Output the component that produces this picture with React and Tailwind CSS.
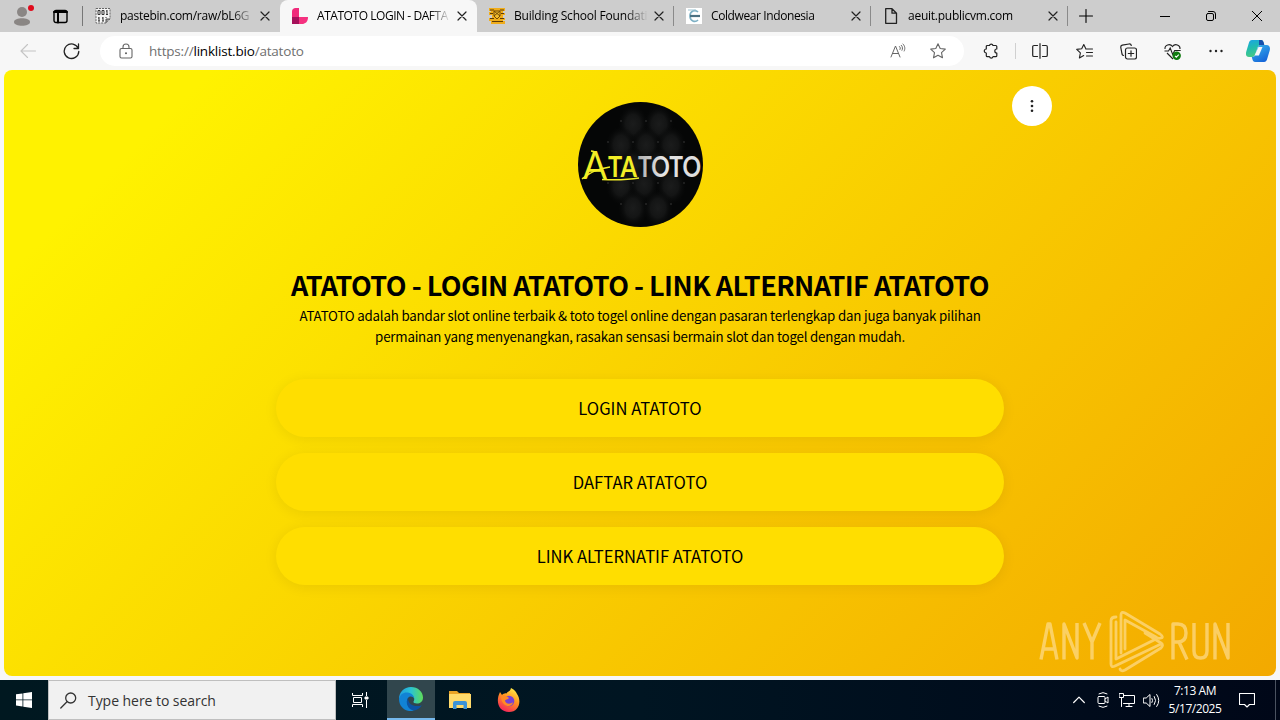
const UI_FONT = "font-['Open_Sans','Noto_Sans',sans-serif]";

const LINKS = ["LOGIN ATATOTO", "DAFTAR ATATOTO", "LINK ALTERNATIF ATATOTO"];

function Icon({ children, className = "", size = 16, box = "0 0 16 16", strokeWidth = 1 }) {
  return (
    <svg
      width={size}
      height={size}
      viewBox={box}
      fill="none"
      stroke="currentColor"
      strokeWidth={strokeWidth}
      strokeLinecap="round"
      strokeLinejoin="round"
      className={`shrink-0 ${className}`}
    >
      {children}
    </svg>
  );
}

function BinaryIcon() {
  return (
    <svg width="16" height="16" viewBox="0 0 16 16" className="shrink-0">
      <path d="M1 .5h14v10.5l-4 4H1z" fill="#f5f5f5" stroke="#666" strokeDasharray="2 1" />
      <path d="M15 11h-4v4" fill="#999" stroke="#555" />
      <g stroke="#333" fill="none">
        <path d="M3 2.5h2v4H3zM7 2.5h2v4H7zM12 2v5M11 3h1M11 6.5h2" />
        <path d="M4 9v4M3 10h1M3 13h2M8 9v4M7 10h1M7 13h2M11 9v1" />
      </g>
    </svg>
  );
}

function LinklistIcon() {
  return (
    <svg width="16" height="16" viewBox="0 0 16 16" className="shrink-0">
      <path d="M0 3.5C0 1.5 1.5 0 3.500 0H7v9H0z" fill="#f02a7b" />
      <path d="M0 9h7v7H0z" fill="#a5105a" />
      <path d="M7 9h9c0 5-3 7-6 7H7z" fill="#f5317f" />
    </svg>
  );
}

function SchoolIcon() {
  return (
    <svg width="16" height="16" viewBox="0 0 16 16" className="shrink-0">
      <path d="M0 0h16v3h-2v2h2v2h-2v3h2v2h-2v1h2v3H2v-3H0v-3h3V7H0V4h2V3H0z" fill="#f0ad1b" />
      <path d="M1 2h4M11 2h4M1 5.500h3M12 5.500h3M1 10.500h4M11 10.500h4M3 13.500h11" stroke="#5d3b06" />
      <path d="M5 3h6v5l-3 3-3-3zM5 3l6 5M11 3L5 8" fill="#f3bc2c" stroke="#704909" />
    </svg>
  );
}

function ColdwearIcon() {
  return (
    <svg width="16" height="16" viewBox="0 0 16 16" className="shrink-0">
      <path d="M0 0h16v16H0z" fill="#fff" />
      <path d="M12 4C9 1 4 3 4 8s5 7 8 4" fill="none" stroke="#7db0c4" strokeWidth="1.700" />
      <path d="M2 2h8" stroke="#9ec4d2" />
      <path d="M4 8h10" stroke="#4c7182" strokeWidth="2.200" />
    </svg>
  );
}

function PageIcon() {
  return (
    <Icon strokeWidth={1.3} className="text-[#222]">
      <path d="M2.700.7H9l4.500 4.500v10.100H2.700zM9 .7v4.500h4.500" />
    </Icon>
  );
}

const TABS = [
  { icon: BinaryIcon, title: "pastebin.com/raw/bL6G", tracking: "tracking-[-0.25px]", divider: false },
  { icon: LinklistIcon, title: "ATATOTO LOGIN - DAFTA", tracking: "tracking-[-0.45px]", active: true },
  { icon: SchoolIcon, title: "Building School Foundati", tracking: "tracking-[-0.2px]", divider: true },
  { icon: ColdwearIcon, title: "Coldwear Indonesia", tracking: "tracking-[-0.4px]", divider: true },
  { icon: PageIcon, title: "aeuit.publicvm.com", tracking: "tracking-[-0.25px]", divider: true },
];

function Tab({ tab }) {
  const TabIcon = tab.icon;
  return (
    <div
      className={`flex h-8 w-[197px] shrink-0 items-center pl-3 ${
        tab.active ? "rounded-t-lg bg-[#f7f7f7]" : ""
      }`}
    >
      <TabIcon />
      <span
        className={`ml-[9px] w-[134px] shrink-0 whitespace-nowrap text-[12px] leading-8 text-black [mask-image:linear-gradient(to_right,#000_112px,transparent_134px)] ${tab.tracking}`}
      >
        {tab.title}
      </span>
      <Icon size={10} box="0 0 10 10" className="ml-[6px] text-[#222]" strokeWidth={1.2}>
        <path d="M1 1l8 8M9 1L1 9" />
      </Icon>
      <span className={`ml-auto h-5 w-px ${tab.divider ? "bg-[#8a8a8a]" : ""}`} />
    </div>
  );
}

function TabStrip() {
  return (
    <div className="flex h-8 items-center bg-[#cdcdcd]">
      <div className="relative ml-[13px] flex h-8 w-[18px] items-center">
        <svg width="18" height="20" viewBox="0 0 18 20">
          <circle cx="9" cy="6" r="5" fill="#8a8684" />
          <path d="M1 16c0-5 16-5 16 0 0 5-16 5-16 0z" fill="#8a8684" />
        </svg>
        <span className="absolute top-[5px] left-[15px] size-1.5 rounded-full bg-[#e00b1c]" />
      </div>
      <Icon size={15} box="0 0 15 15" className="ml-[22px] text-black" strokeWidth={1.4}>
        <rect x="1" y="1.500" width="13" height="12" rx="2" />
        <path d="M1 3h13M5 4.500v9" strokeWidth="2" />
      </Icon>
      <span className="ml-[14px] h-5 w-px bg-[#777]" />
      <div className="flex">
        {TABS.map((tab) => (
          <Tab key={tab.title} tab={tab} />
        ))}
      </div>
      <div className="flex flex-1 items-center justify-between pr-[18px] pl-[11px] text-black">
        <Icon size={14} box="0 0 14 14" strokeWidth={1.100}>
          <path d="M7 .5v13M.5 7h13" />
        </Icon>
        <div className="flex items-center gap-[36px]">
          <Icon size={10} box="0 0 10 10">
            <path d="M0 5.500h10" />
          </Icon>
          <Icon size={10} box="0 0 10 10">
            <rect x=".5" y="2.500" width="7" height="7" rx="1.500" />
            <path d="M2.500.5h4.500a2.500 2.500 0 0 1 2.500 2.500v4.500" />
          </Icon>
          <Icon size={10} box="0 0 10 10">
            <path d="M0 0l10 10M10 0L0 10" />
          </Icon>
        </div>
      </div>
    </div>
  );
}

function CopilotIcon() {
  return (
    <svg width="24" height="22" viewBox="0 0 24 22" className="shrink-0">
      <defs>
        <linearGradient id="copLeft" x1="0" y1="0" x2="0.3" y2="1">
          <stop offset="0" stopColor="#1aa3e8" />
          <stop offset=".5" stopColor="#21bcae" />
          <stop offset="1" stopColor="#47c985" />
        </linearGradient>
        <linearGradient id="copRight" x1="0" y1="0" x2="0.6" y2="1">
          <stop offset="0" stopColor="#39b8ed" />
          <stop offset="1" stopColor="#1667d9" />
        </linearGradient>
      </defs>
      <path d="M6 0h9c2 0 2.500 1.500 3.200 5H15c-2 0-3 1-3.600 3L9.500 14C8.800 16 8 17 6 17H3c-3 0-3.500-2.500-2.700-5.500l2.400-8C3.300 1.500 4 0 6 0z" fill="url(#copLeft)" />
      <path d="M13 0h2c2 0 2.600 1.600 3.300 5H15c-1 0-1.500.4-2 1z" fill="#174fab" />
      <path d="M18 22H9.500c-2.500 0-3-2-3.700-5 2 0 3-.6 3.700-3l2-6c.6-2 1.500-3 3.500-3h5.500c3 0 4 2.500 3.200 5.500l-2.400 8C20.700 20.500 20 22 18 22z" fill="url(#copRight)" />
      <path d="M12.500 7h4l-3.600 8.500H8.500z" fill="#f7f7f7" />
    </svg>
  );
}

function Toolbar() {
  return (
    <div className="flex h-[38px] items-center text-[#222]">
      <Icon className="ml-5 text-[#c4c4c4]" strokeWidth={1.100}>
        <path d="M15.500 8H1M7.500 1.500L1 8l6.500 6.500" />
      </Icon>
      <Icon size={17} box="0 0 17 17" className="ml-[27px]" strokeWidth={1.300}>
        <path d="M15.300 5.500A7.300 7.300 0 1 0 15.800 8.500M15.500 1v4.500H11" />
      </Icon>
      <div className="ml-[20px] flex h-[30px] w-[864px] items-center rounded-full bg-white text-[#666]">
        <Icon className="ml-[18px]" strokeWidth={1.100}>
          <rect x="2" y="5.500" width="12" height="9.500" rx="1.500" />
          <path d="M5 5.500V4a3 3 0 0 1 6 0v1.500" />
          <circle cx="8" cy="10.200" r=".5" fill="currentColor" />
        </Icon>
        <span className="ml-[15px] text-[13.500px] tracking-[-0.2px] text-[#707070]">
          https://<span className="text-black">linklist.bio</span>/atatoto
        </span>
        <svg width="16" height="16" viewBox="0 0 16 16" className="ml-auto" fill="none" stroke="#666" strokeLinecap="round">
          <path d="M1 14L5.500 3 10 14M2.500 10.500h6M9.500 3.500c1 .8 1 2.200.5 3M11.300 2.300c1.500 1.500 1.500 3.700.7 5M13 1c2.200 2.200 2.200 5 1.200 7" />
        </svg>
        <Icon className="mr-[18px] ml-[24px]" strokeWidth={1.100}>
          <path d="M8 .8l2.200 4.700 5.100.6-3.800 3.500 1 5.200L8 12.300l-4.500 2.500 1-5.200L.7 6.100l5.100-.6z" />
        </Icon>
      </div>
      <Icon className="ml-[19px]" strokeWidth={1.200}>
        <path d="M4.300 2.500H6.500a1.800 1.800 0 0 1 3.500 0h2.800a1 1 0 0 1 1 1V6a2 2 0 1 0 0 4v2.700a1 1 0 0 1-1 1H10a1.800 1.800 0 0 1-3.500 0H4.300a1 1 0 0 1-1-1V10a2 2 0 0 1 0-4V3.500a1 1 0 0 1 1-1z" />
      </Icon>
      <span className="ml-[16px] h-4 w-px bg-[#d0d0d0]" />
      <Icon className="ml-[16px]" strokeWidth={1.200}>
        <path d="M5.500 2.500H2A1.300 1.300 0 0 0 .7 3.800v8.400A1.300 1.300 0 0 0 2 13.500h3.500M8 .7v14.600M10.500 2.500H14a1.300 1.300 0 0 1 1.300 1.300v8.400a1.300 1.300 0 0 1-1.300 1.300h-3.500" />
      </Icon>
      <Icon size={17} box="0 0 17 17" className="ml-[28px]" strokeWidth={1.100}>
        <path d="M9.800 5.800L7.800 1.500 5.700 5.800l-5 .6 3.700 3.500-1 5 4.300-2.400M9.800 6h6.700M10.500 9.500h6M10.500 13h6" />
      </Icon>
      <Icon size={17} box="0 0 17 17" className="ml-[27px]" strokeWidth={1.200}>
        <path d="M3.500 12.500A2 2 0 0 1 2 11L.8 4.500a2 2 0 0 1 1.500-2.300L9 1a2 2 0 0 1 2.300 1.500" />
        <rect x="5.500" y="5" width="11" height="11" rx="2" />
        <path d="M11 7.800v5.400M8.300 10.500h5.400" />
      </Icon>
      <svg width="18" height="17" viewBox="0 0 18 17" className="ml-[27px]" fill="none" stroke="#222" strokeWidth="1.100">
        <path d="M1 6C.5 2 6 0 8.500 3.500 11 0 16.500 2 16 6M3 10l6 6M.5 8h4l1.700-3 2.500 6.500 2-4h6" />
        <circle cx="12.700" cy="12.700" r="4.200" fill="#107c10" stroke="none" />
        <path d="M11 12.800l1.300 1.300 2.500-2.500" stroke="#fff" />
      </svg>
      <Icon className="ml-[26px]">
        <g fill="currentColor" stroke="none">
          <circle cx="2.500" cy="8" r="1.200" />
          <circle cx="8" cy="8" r="1.200" />
          <circle cx="13.500" cy="8" r="1.200" />
        </g>
      </Icon>
      <span className="ml-[22px]">
        <CopilotIcon />
      </span>
    </div>
  );
}

function Logo() {
  const studs = [
    [43, 19], [68, 19], [93, 19],
    [30, 40], [55, 40], [80, 40], [106, 40],
    [30, 81], [55, 81], [80, 81], [106, 81],
    [43, 102], [68, 102], [93, 102],
  ];
  const pads = [
    [55, 22], [81, 22], [43, 43], [68, 43], [93, 43], [55, 64],
    [80, 64], [43, 84], [66, 82], [93, 84], [55, 106], [80, 106],
  ];
  return (
    <svg width="125" height="125" viewBox="0 0 125 125">
      <defs>
        <radialGradient id="pad">
          <stop offset="0" stopColor="#1b1c1c" />
          <stop offset=".5" stopColor="#141515" />
          <stop offset="1" stopColor="#080909" stopOpacity="0" />
        </radialGradient>
        <linearGradient id="silver" gradientUnits="userSpaceOnUse" x1="60" y1="0" x2="122" y2="0">
          <stop offset="0" stopColor="#b0b0b0" />
          <stop offset=".4" stopColor="#e4e4e4" />
          <stop offset="1" stopColor="#dcdcdc" />
        </linearGradient>
        <clipPath id="round">
          <circle cx="62.500" cy="62.500" r="62.500" />
        </clipPath>
      </defs>
      <g clipPath="url(#round)">
        <path d="M0 0h125v125H0z" fill="#050606" />
        {pads.map(([x, y]) => (
          <ellipse key={`${x}-${y}`} cx={x} cy={y} rx="15" ry="19" fill="url(#pad)" />
        ))}
        {studs.map(([x, y]) => (
          <circle key={`${x}-${y}`} cx={x} cy={y} r=".8" fill="#3c3c3c" />
        ))}
      </g>
      <text y="75" fontSize="28" className="font-['Lato',sans-serif] font-bold">
        <tspan x="5" y="77" fontSize="38" fontWeight="400" fill="#f3ee26" textLength="24" lengthAdjust="spacingAndGlyphs">A</tspan>
        <tspan x="30" y="75" fill="#f3ee26" textLength="29" lengthAdjust="spacingAndGlyphs">TA</tspan>
        <tspan x="60" y="75" fill="url(#silver)" textLength="63" lengthAdjust="spacingAndGlyphs">TOTO</tspan>
      </text>
      <path d="M4 77c7-5 13-10 28-12M13 49c3 0 4 .5 5 3M24 77.500q22 1 37-1.500" stroke="#f3ee26" fill="none" strokeWidth="1.400" />
    </svg>
  );
}

function Watermark() {
  return (
    <svg width="196" height="64" viewBox="0 0 196 64" className="absolute right-[44px] bottom-[3px] overflow-visible opacity-65">
      <g fill="none" stroke="#ffe09a" strokeWidth="3.400" strokeLinejoin="round">
        <path d="M5 50.500L12 15h2l7 35.500M7.500 40h11" />
        <path d="M28 50.500V15l13 34V14" />
        <path d="M48 14l8 19 8-19M56 33v17.500" />
        <path d="M137 50.500V15h5q8 0 8 9t-8 9h-5M143 33l8 17.500" />
        <path d="M158 14v28q0 7 6.500 7t6.500-7V14" />
        <path d="M179 50.500V15l13 34V14" />
      </g>
      <g fill="none" stroke="#ffe09a" strokeWidth="2.800" strokeLinejoin="round" strokeLinecap="round">
        <path d="M80 8q-5 0-5 4v43q0 4 4 2l46-22" />
        <path d="M80 13v37l38-19" />
        <path d="M85 44V6q0-4 4-2l35 21q4 3 1 4t-5-1L89 11v29" />
        <path d="M84 60q1 3 5 1l36-22q3-3 0-5l-16-10" />
      </g>
    </svg>
  );
}

function ProfilePage() {
  return (
    <main className="relative mx-1 flex h-[606px] flex-col items-center overflow-hidden rounded-lg bg-[linear-gradient(135deg,#fff200_11%,#f3a900_100%)] font-['Noto_Sans_CJK_SC',sans-serif] text-black">
      <div className="mt-8 h-[125px]">
        <Logo />
      </div>
      <h1 className="mt-[40px] text-[27px] leading-[36px] font-bold tracking-[-0.55px] whitespace-nowrap">
        ATATOTO - LOGIN ATATOTO - LINK ALTERNATIF ATATOTO
      </h1>
      <p className="mt-[2px] text-center text-[13.3px] leading-[21px] tracking-[-0.2px] whitespace-nowrap">
        ATATOTO adalah bandar slot online terbaik &amp; toto togel online dengan pasaran terlengkap dan juga banyak pilihan
        <br />
        permainan yang menyenangkan, rasakan sensasi bermain slot dan togel dengan mudah.
      </p>
      <div className="mt-[32px] flex flex-col gap-4">
        {LINKS.map((link) => (
          <a
            key={link}
            className="flex h-[58px] w-[728px] items-center justify-center rounded-full bg-[#ffde00] text-[16.6px] shadow-[0_2px_14px_rgba(0,0,0,0.07)]"
          >
            {link}
          </a>
        ))}
      </div>
      <button className="absolute top-4 left-[1008px] flex size-10 items-center justify-center rounded-full bg-white">
        <svg width="4" height="14" viewBox="0 0 4 14" fill="#222">
          <circle cx="2" cy="2.300" r="1.300" />
          <circle cx="2" cy="7" r="1.300" />
          <circle cx="2" cy="11.700" r="1.300" />
        </svg>
      </button>
      <Watermark />
    </main>
  );
}

function EdgeIcon() {
  return (
    <svg width="24" height="24" viewBox="0 0 24 24">
      <defs>
        <linearGradient id="edgeTop" x1="0" x2="1">
          <stop offset="0" stopColor="#1e9de0" />
          <stop offset=".5" stopColor="#2bc3d2" />
          <stop offset="1" stopColor="#5fdc58" />
        </linearGradient>
      </defs>
      <path d="M0 12C0 5 5 0 12 0s12 5 12 10.500c0 4-3 6-6 6-2.500 0-4-1-3.500-2 1.500-2 1-5.500-3-6C7 8 2 9 0 12z" fill="url(#edgeTop)" />
      <path d="M0 12c1-5 5-7 8.500-6.500 4 .3 6.500 3 6.500 6-1-2-4-3-6-.5-3 4 1 10.500 6 12.500C7 26 0 20 0 12z" fill="#1183d5" />
      <path d="M9 11c-3 4-.5 12 6.500 12.500 3-.5 6-3 7.300-5.300C17 20.500 9 18.500 9 11z" fill="#0c53a3" />
    </svg>
  );
}

function FolderIcon() {
  return (
    <svg width="22" height="18" viewBox="0 0 22 18">
      <path d="M0 0h8l2 2h11v14H0z" fill="#e9a326" />
      <path d="M0 3h22v14H0z" fill="#ffda6b" />
      <path d="M4 18v-6q0-2 2-2h10q2 0 2 2v6h-3.500v-4h-7v4z" fill="#3b93d8" />
    </svg>
  );
}

function FirefoxIcon() {
  return (
    <svg width="24" height="24" viewBox="0 0 24 24">
      <defs>
        <linearGradient id="fox" x1=".8" y1="0" x2=".3" y2="1">
          <stop offset="0" stopColor="#fff34a" />
          <stop offset=".45" stopColor="#ff9420" />
          <stop offset="1" stopColor="#f5215c" />
        </linearGradient>
      </defs>
      <path d="M3 4l2 3c1-1 3-2 4.500-1.500C11 3 13 4 14 0c4 2 5 4 6 6 5 7 2 18-8 18S-2 14 3 4z" fill="url(#fox)" />
      <circle cx="12" cy="13" r="5.300" fill="#7541d5" />
      <path d="M4 8c3-1 6 0 8 2-1 2-4 1-4 3 2 4 6 3 8 1-1 7-12 5-12-6z" fill="#ff8a24" />
    </svg>
  );
}

function Taskbar() {
  return (
    <div className="flex h-10 items-center bg-linear-to-r from-[#001820] via-[#001522] to-[#000718] text-white">
      <div className="flex w-12 justify-center">
        <svg width="16" height="16" viewBox="0 0 16 16" fill="#fff">
          <path d="M0 2.300L6.500 1.400v6.100H0zM7.300 1.300L16 0v7.500H7.300zM0 8.300h6.500v6.200L0 13.600zM7.300 8.300H16V16l-8.700-1.300z" />
        </svg>
      </div>
      <div className="flex h-10 w-72 items-center border border-[#bfbfbf] bg-[#f1f1f1] pl-[11px] text-[#333]">
        <Icon size={17} box="0 0 17 17" strokeWidth={1.300}>
          <circle cx="10.700" cy="6" r="5" />
          <path d="M7 9.700L.8 16" />
        </Icon>
        <span className="ml-[11px] text-[14px] tracking-[-0.05px]">Type here to search</span>
      </div>
      <div className="flex w-[51px] justify-center pr-[3px]">
        <svg width="17" height="16" viewBox="0 0 17 16" fill="none" stroke="#fff">
          <path d="M.5 1v2.500h10V1M.5 15v-2.500h10V15M1.500 5.500h8v5h-8zM14.500 0v4M14.500 8v8" />
          <path d="M13 5h3v2h-3z" fill="#fff" />
        </svg>
      </div>
      <div className="flex h-10 w-12 items-center justify-center border-b-2 border-[#76b9ed] bg-[#31464d]">
        <EdgeIcon />
      </div>
      <div className="flex w-[49px] justify-center">
        <FolderIcon />
      </div>
      <div className="flex w-[49px] justify-center">
        <FirefoxIcon />
      </div>
      <div className="ml-auto flex items-center">
        <Icon size={12} box="0 0 12 12" strokeWidth={1.200}>
          <path d="M.7 8.500L6 3.200l5.300 5.300" />
        </Icon>
        <Icon className="ml-[10px]">
          <rect x="3" y="4.500" width="7" height="7" rx="1" />
          <path d="M10 7l3-2v6l-3-2M4 1.800q4-2.500 8 0M4 14.200q4 2.500 8 0" />
        </Icon>
        <Icon className="ml-[8px]">
          <path d="M5 3.500h10.500v8H4.500M7 14.500h6M10 11.500v3M.5 1.500h4v4h-4zM2.500 5.500v9" />
        </Icon>
        <Icon size={17} box="0 0 17 17" className="ml-[8px]">
          <path d="M.7 6h2.500L7 2.500v12L3.200 11H.7zM9 6.500q1.300 2 0 4M11.300 4.500q2.700 4 0 8M13.700 2.500q4.300 6 0 12" />
        </Icon>
        <div className="ml-[8px] flex w-[54px] flex-col items-center text-[12px] leading-[18px] tracking-[-0.45px] whitespace-nowrap">
          <span>7:13 AM</span>
          <span>5/17/2025</span>
        </div>
        <Icon className="ml-[17px]" strokeWidth={1.100}>
          <path d="M.5 1.500h15v11h-5L8 15l-2.500-2.500h-5z" />
        </Icon>
        <span className="ml-5 h-10 w-px bg-[#4a5260]" />
        <span className="w-1" />
      </div>
    </div>
  );
}

export default function App() {
  return (
    <div className={`h-[720px] w-[1280px] overflow-hidden bg-[#f7f7f7] ${UI_FONT}`}>
      <TabStrip />
      <Toolbar />
      <ProfilePage />
      <div className="h-1" />
      <Taskbar />
    </div>
  );
}
